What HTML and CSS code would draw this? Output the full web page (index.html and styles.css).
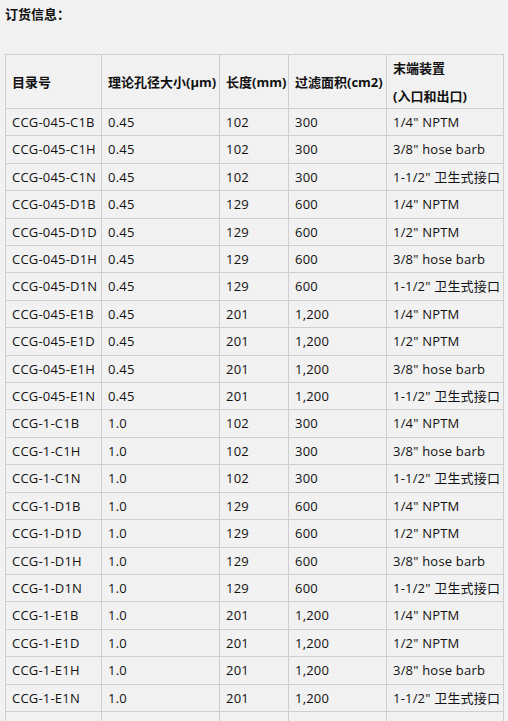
FILE: index.html
```html
<!DOCTYPE html>
<html lang="zh-CN">
<head>
<meta charset="utf-8">
<title>订货信息</title>
<link rel="stylesheet" href="styles.css">
</head>
<body>
<p class="title">订货信息：</p>
<table class="order">
  <colgroup>
    <col class="c1"><col class="c2"><col class="c3"><col class="c4"><col class="c5">
  </colgroup>
  <thead>
    <tr>
      <th>目录号</th>
      <th>理论孔径大小(μm)</th>
      <th>长度(mm)</th>
      <th>过滤面积(cm2)</th>
      <th><span class="line">末端装置</span><span class="line second">(入口和出口)</span></th>
    </tr>
  </thead>
  <tbody>
    <tr><td>CCG-045-C1B</td><td>0.45</td><td>102</td><td>300</td><td>1/4" NPTM</td></tr>
    <tr><td>CCG-045-C1H</td><td>0.45</td><td>102</td><td>300</td><td>3/8" hose barb</td></tr>
    <tr><td>CCG-045-C1N</td><td>0.45</td><td>102</td><td>300</td><td>1-1/2" 卫生式接口</td></tr>
    <tr><td>CCG-045-D1B</td><td>0.45</td><td>129</td><td>600</td><td>1/4" NPTM</td></tr>
    <tr><td>CCG-045-D1D</td><td>0.45</td><td>129</td><td>600</td><td>1/2" NPTM</td></tr>
    <tr><td>CCG-045-D1H</td><td>0.45</td><td>129</td><td>600</td><td>3/8" hose barb</td></tr>
    <tr><td>CCG-045-D1N</td><td>0.45</td><td>129</td><td>600</td><td>1-1/2" 卫生式接口</td></tr>
    <tr><td>CCG-045-E1B</td><td>0.45</td><td>201</td><td>1,200</td><td>1/4" NPTM</td></tr>
    <tr><td>CCG-045-E1D</td><td>0.45</td><td>201</td><td>1,200</td><td>1/2" NPTM</td></tr>
    <tr><td>CCG-045-E1H</td><td>0.45</td><td>201</td><td>1,200</td><td>3/8" hose barb</td></tr>
    <tr><td>CCG-045-E1N</td><td>0.45</td><td>201</td><td>1,200</td><td>1-1/2" 卫生式接口</td></tr>
    <tr><td>CCG-1-C1B</td><td>1.0</td><td>102</td><td>300</td><td>1/4" NPTM</td></tr>
    <tr><td>CCG-1-C1H</td><td>1.0</td><td>102</td><td>300</td><td>3/8" hose barb</td></tr>
    <tr><td>CCG-1-C1N</td><td>1.0</td><td>102</td><td>300</td><td>1-1/2" 卫生式接口</td></tr>
    <tr><td>CCG-1-D1B</td><td>1.0</td><td>129</td><td>600</td><td>1/4" NPTM</td></tr>
    <tr><td>CCG-1-D1D</td><td>1.0</td><td>129</td><td>600</td><td>1/2" NPTM</td></tr>
    <tr><td>CCG-1-D1H</td><td>1.0</td><td>129</td><td>600</td><td>3/8" hose barb</td></tr>
    <tr><td>CCG-1-D1N</td><td>1.0</td><td>129</td><td>600</td><td>1-1/2" 卫生式接口</td></tr>
    <tr><td>CCG-1-E1B</td><td>1.0</td><td>201</td><td>1,200</td><td>1/4" NPTM</td></tr>
    <tr><td>CCG-1-E1D</td><td>1.0</td><td>201</td><td>1,200</td><td>1/2" NPTM</td></tr>
    <tr><td>CCG-1-E1H</td><td>1.0</td><td>201</td><td>1,200</td><td>3/8" hose barb</td></tr>
    <tr><td>CCG-1-E1N</td><td>1.0</td><td>201</td><td>1,200</td><td>1-1/2" 卫生式接口</td></tr>
    <tr class="blank"><td></td><td></td><td></td><td></td><td></td></tr>
  </tbody>
</table>
</body>
</html>
```

FILE: styles.css
```css
html {
  background: #f3f3f3;
}
body {
  margin: 0;
  padding: 5px;
  background-color: #f3f3f3;
  background-image:
    linear-gradient(45deg, rgba(0,0,0,0.012) 25%, transparent 25%, transparent 75%, rgba(0,0,0,0.012) 75%),
    linear-gradient(45deg, rgba(0,0,0,0.012) 25%, transparent 25%, transparent 75%, rgba(0,0,0,0.012) 75%);
  background-size: 4px 4px;
  background-position: 0 0, 2px 2px;
  font-family: "Open Sans", "Noto Sans CJK SC", sans-serif;
  font-size: 13px;
  line-height: 18.4px;
  color: #111;
}
.title {
  margin: 0 0 30.6px;
  font-family: "Noto Sans CJK TC", "Noto Sans CJK SC", sans-serif;
  font-weight: bold;
}
.order {
  border-collapse: collapse;
  table-layout: fixed;
  width: 498px;
}
.c1 { width: 96px; }
.c2 { width: 118px; }
.c3 { width: 69px; }
.c4 { width: 98px; }
.c5 { width: 117px; }
.order th,
.order td {
  border: 1px solid #cfcfcf;
  padding: 4px 6px;
  white-space: nowrap;
  overflow: visible;
  text-align: left;
  vertical-align: middle;
  font-weight: normal;
}
.order td {
  letter-spacing: 0.2px;
}
.order th {
  font-weight: bold;
  padding: 4px 6px 3px;
}
.order .line {
  display: block;
}
.order .second {
  margin-top: 9.2px;
}
.order .blank td {
  height: 18.4px;
}
```
